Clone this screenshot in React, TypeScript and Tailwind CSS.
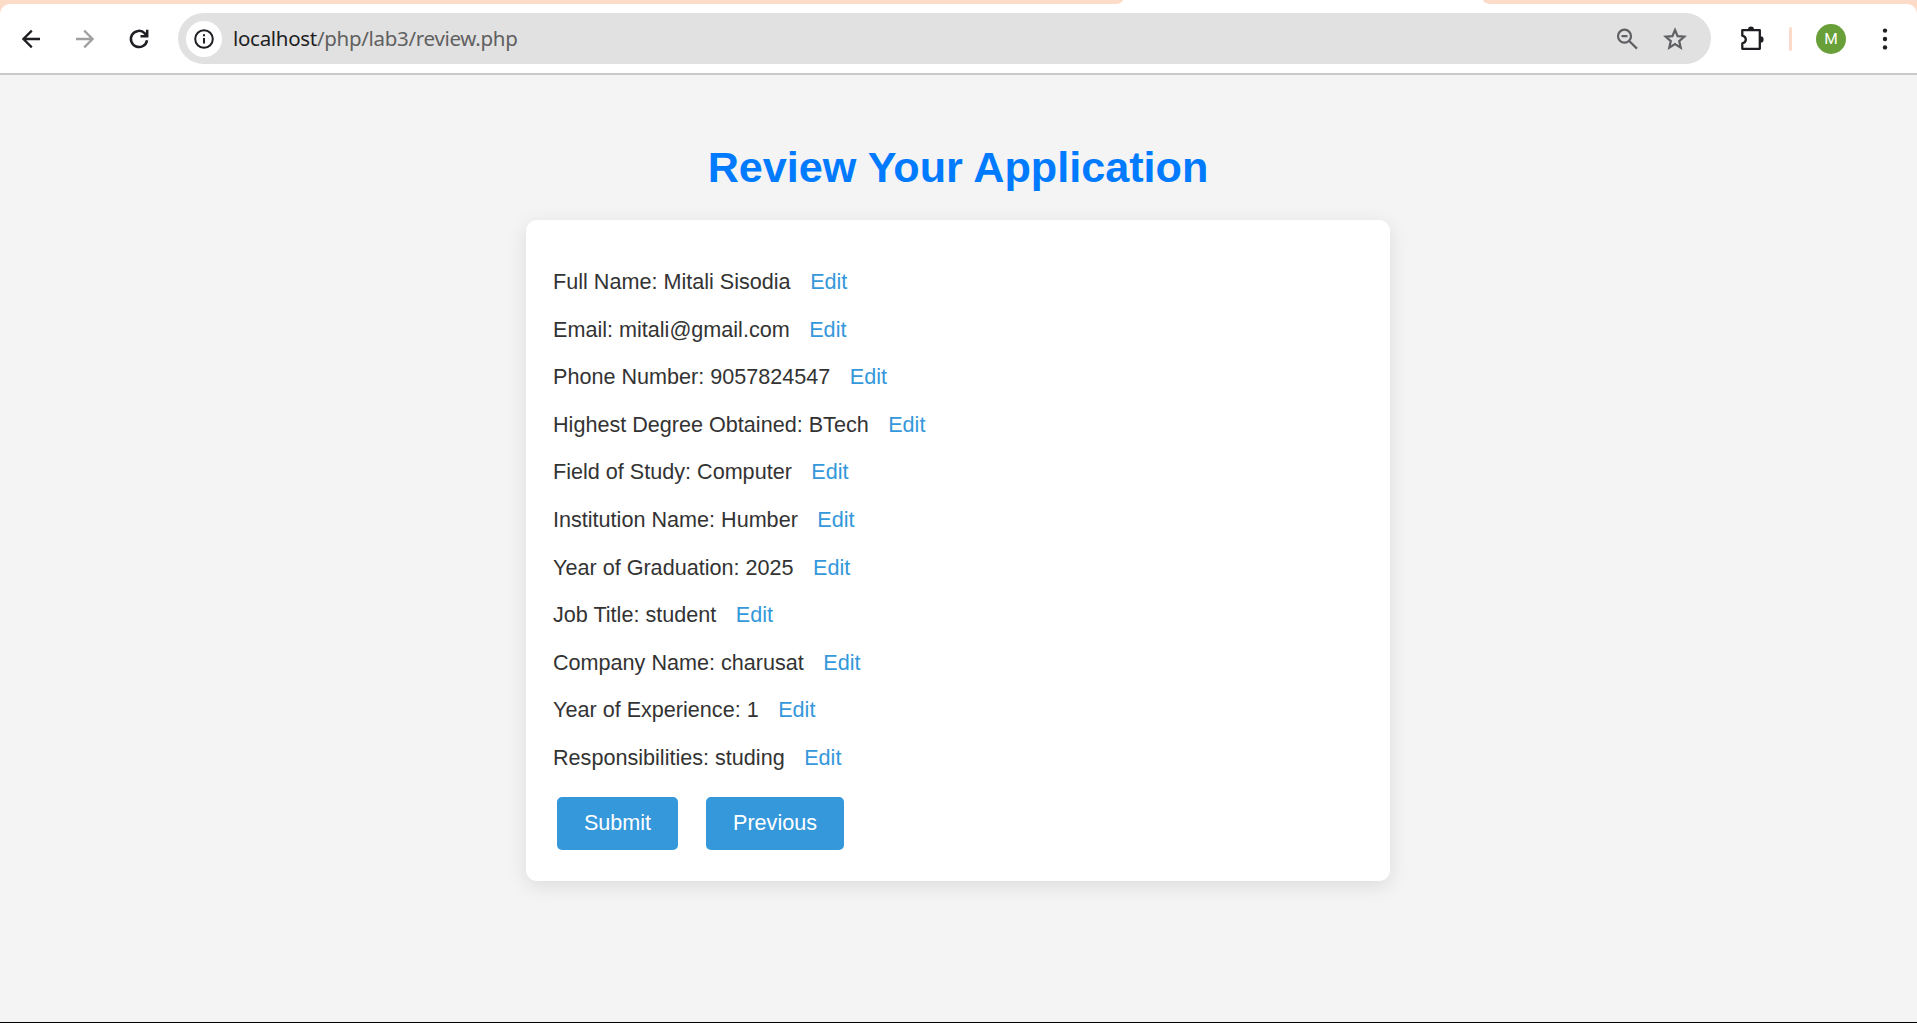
import React from "react";

const fields = [
  { label: "Full Name", value: "Mitali Sisodia" },
  { label: "Email", value: "mitali@gmail.com" },
  { label: "Phone Number", value: "9057824547" },
  { label: "Highest Degree Obtained", value: "BTech" },
  { label: "Field of Study", value: "Computer" },
  { label: "Institution Name", value: "Humber" },
  { label: "Year of Graduation", value: "2025" },
  { label: "Job Title", value: "student" },
  { label: "Company Name", value: "charusat" },
  { label: "Year of Experience", value: "1" },
  { label: "Responsibilities", value: "studing" },
];

function TabStrip() {
  return (
    <div className="flex h-1 bg-white">
      <div className="h-1 w-[1123px] rounded-br-[8px_4px] bg-[#fddbc9]" />
      <div className="h-1 w-[360px]" />
      <div className="h-1 flex-1 rounded-bl-[8px_4px] bg-[#fddbc9]" />
    </div>
  );
}

function Toolbar() {
  return (
    <div className="bg-[#fddbc9]">
      <div className="flex h-[71px] items-center rounded-t-[10px] border-b-2 border-[#c8c8c8] bg-white text-[#1f1f23]">
        <svg className="ml-[17px] size-7" viewBox="0 0 28 28" fill="none" stroke="currentColor" strokeWidth="2.3">
          <path d="M23 14H6.5M14.8 5.6 6.4 14l8.4 8.4" />
        </svg>
        <svg className="ml-[26px] size-7 text-[#a0a0a2]" viewBox="0 0 28 28" fill="none" stroke="currentColor" strokeWidth="2.3">
          <path d="M5 14h16.5M13.2 5.6l8.4 8.4-8.4 8.4" />
        </svg>
        <svg className="ml-[26px] size-7" viewBox="0 0 28 28" fill="none" stroke="currentColor" strokeWidth="2.5">
          <path d="M22 15.2A8.1 8.1 0 1 1 19.8 8.3L22 10.8" />
          <path d="M22.2 4.8v6.4h-6.7" />
        </svg>

        <div className="ml-[25px] flex h-[51px] w-[1533px] items-center rounded-full bg-[#e1e1e1]">
          <div className="ml-2 flex size-9 items-center justify-center rounded-full bg-white">
            <svg className="-ml-px size-5" viewBox="0 0 20 20" fill="none" stroke="currentColor" strokeWidth="2">
              <circle cx="10" cy="10" r="8.8" />
              <path d="M10 9v5.6M10 5.2v2" />
            </svg>
          </div>
          <div className="ml-[11px] font-['Noto_Sans','Open_Sans',sans-serif] text-[20.5px] tracking-[-0.3px] whitespace-nowrap text-[#606060]">
            <span className="text-[#1f1f23]">localhost</span>/php/lab3/review.php
          </div>
          <svg className="mr-6 ml-auto size-6 text-[#5f6063]" viewBox="0 0 24 24" fill="none" stroke="currentColor" strokeWidth="2.2">
            <circle cx="9.5" cy="9.2" r="6.5" />
            <path d="M14.2 14 22 21.6M6.5 9.2h6" />
          </svg>
          <svg className="mr-6 size-6 text-[#5f6063]" viewBox="0 0 24 24" fill="none" stroke="currentColor" strokeWidth="2.2">
            <path d="m12 3 2.600 6.100 6.700.6-5.100 4.400 1.500 6.500-5.700-3.500-5.700 3.500 1.500-6.500-5.100-4.400 6.700-.6z" />
          </svg>
        </div>

        <svg className="ml-7 size-7" viewBox="0 0 28 28">
          <path d="M3.3 5.2h17.500v18.600H3.300v-5.500c4.700-1 4.700-6.500 0-7.600z" fill="none" stroke="currentColor" strokeWidth="2.300" strokeLinejoin="round" />
          <path d="M9 4.600a3 3 0 0 1 6 0zM21.400 11.300a3.200 3.200 0 0 1 0 6.400z" fill="currentColor" />
        </svg>
        <div className="ml-[22px] h-6 w-[3px] rounded-full bg-[#fddbc9]" />
        <div className="ml-6 flex size-[30px] items-center justify-center rounded-full bg-[#689f38] pt-0.5 font-[Roboto,sans-serif] text-[15.5px] leading-none text-white">
          M
        </div>
        <svg className="ml-[25px] size-7" viewBox="0 0 28 28" fill="currentColor">
          <circle cx="14" cy="5.6" r="2.2" />
          <circle cx="14" cy="14" r="2.2" />
          <circle cx="14" cy="22.4" r="2.2" />
        </svg>
      </div>
    </div>
  );
}

export default function App() {
  return (
    <div className="flex h-[1023px] w-[1917px] flex-col overflow-hidden border-b border-black bg-[#f4f4f4]">
      <TabStrip />
      <Toolbar />
      <main className="flex flex-1 flex-col items-center pr-px font-['Liberation_Sans',Arial,sans-serif] text-[21.6px] text-[#333]">
        <h1 className="mt-[67px] text-[43.2px] leading-[50px] font-bold whitespace-nowrap text-[#007bff]">
          Review Your Application
        </h1>
        <section className="mt-[28px] h-[661px] w-[864px] rounded-[11px] bg-white px-[27px] pt-[38px] shadow-[0_5px_20px_rgba(0,0,0,0.1)]">
          {fields.map((field) => (
            <p key={field.label} className="h-[47.6px] leading-[47.6px] whitespace-nowrap">
              {field.label}: {field.value}
              <a href="#" className="ml-[19.5px] text-[#3498db]">Edit</a>
            </p>
          ))}
          <div className="mt-[15px] ml-1 flex gap-7">
            <button className="h-[53px] w-[121px] rounded-[5px] bg-[#3498db] text-white">Submit</button>
            <button className="h-[53px] w-[138px] rounded-[5px] bg-[#3498db] text-white">Previous</button>
          </div>
        </section>
      </main>
    </div>
  );
}
